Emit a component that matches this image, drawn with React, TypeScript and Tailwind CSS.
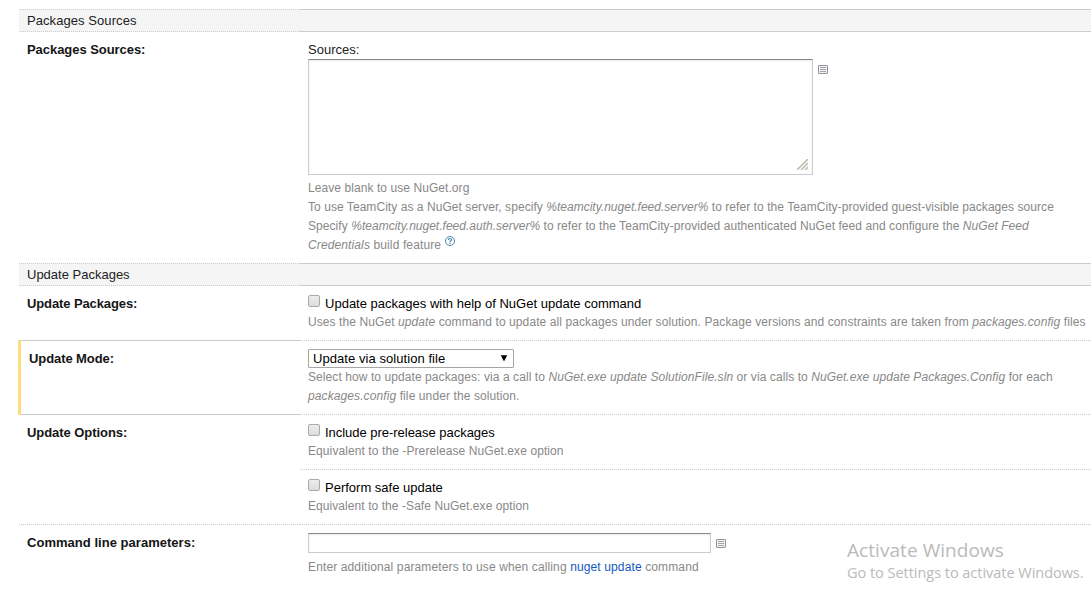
import type { ReactNode } from "react";

function ListIcon({ className }: { className: string }) {
  return (
    <svg className={className} width="10" height="9" viewBox="0 0 10 9">
      <rect x="0.5" y="0.5" width="9" height="8" rx="0.4" fill="#f4f4f4" stroke="#8f9296" />
      <path d="M2 2.5h6M2 4.5h6M2 6.5h6" stroke="#a0a3a7" />
    </svg>
  );
}

function HelpIcon() {
  return (
    <svg className="inline-block align-[3px]" width="10" height="10" viewBox="0 0 10 10" fill="none" stroke="#4c86ab">
      <circle cx="5" cy="5" r="4.5" strokeWidth="1" />
      <path d="M3.4 4V3.5Q3.6 2.5 5 2.5T6.6 3.7Q6.6 4.4 5.6 4.8Q5 5.1 5 6" strokeWidth="1.2" />
      <path d="M5 6.8V8" strokeWidth="1.3" />
    </svg>
  );
}

function SectionHeader({ title, spacing }: { title: string; spacing: string }) {
  return (
    <div className="flex h-[23px] bg-[#f5f5f5]">
      <div className="w-[281px] border-y border-dotted border-[#ccc] pt-[3px] pl-2">
        <span className={spacing}>{title}</span>
      </div>
      <div className="flex-1 border-y border-[#ccc]" />
    </div>
  );
}

function Label({ children, spacing }: { children: ReactNode; spacing: string }) {
  return <span className={`block font-bold text-[#151515] ${spacing}`}>{children}</span>;
}

function Hint({ children, spacing = "" }: { children: ReactNode; spacing?: string }) {
  return <div className={`h-[19px] text-[12px] leading-[19px] text-[#888] ${spacing}`}>{children}</div>;
}

function Check({ label, spacing = "" }: { label: string; spacing?: string }) {
  return (
    <label className="flex h-[18px] items-start">
      <span className="mt-[-1px] mr-[5px] block size-3 rounded-[2px] border border-[#aaa] bg-linear-to-b from-[#ededed] to-[#dcdcdc]" />
      <span className={`text-black ${spacing}`}>{label}</span>
    </label>
  );
}

const field = "block border border-[#ccc] border-t-[#888] bg-white shadow-[inset_0_1px_2px_#e9e9e9]";

export default function App() {
  return (
    <div className="relative h-[601px] w-[1091px] overflow-hidden bg-white pt-[9px] pl-[18px] font-['Liberation_Sans',Arial,sans-serif] text-[13px] leading-[15px] whitespace-nowrap text-[#222]">
      <div className="ml-px">
        <SectionHeader title="Packages Sources" spacing="tracking-[0.07px]" />
        <div className="flex h-[231px]">
          <div className="w-[281px] pt-[10px] pl-2">
            <Label spacing="tracking-[-0.05px]">Packages Sources:</Label>
          </div>
          <div className="flex-1 pt-[10px] pl-2">
            <div className="h-[17px]">Sources:</div>
            <div className="flex h-[120px] items-start">
              <div className={`${field} flex h-[116px] w-[505px] items-end justify-end p-1`}>
                <svg width="11" height="11" viewBox="0 0 11 11" stroke="#bfbfac" strokeWidth="1.6">
                  <path d="M0 11L11 0M4 11L11 4M8 11L11 8" />
                </svg>
              </div>
              <ListIcon className="mt-[6px] ml-[5px]" />
            </div>
            <Hint spacing="tracking-[0.07px]">Leave blank to use NuGet.org</Hint>
            <Hint spacing="tracking-[0.055px]">
              To use TeamCity as a NuGet server, specify <i className="tracking-[0.01px]">%teamcity.nuget.feed.server%</i> to refer to the TeamCity-provided guest-visible packages source
            </Hint>
            <Hint spacing="tracking-[0.068px]">
              Specify <i className="tracking-[0.01px]">%teamcity.nuget.feed.auth.server%</i> to refer to the TeamCity-provided authenticated NuGet feed and configure the <i>NuGet Feed</i>
            </Hint>
            <Hint spacing="tracking-[0.12px]">
              <i>Credentials</i> build feature <HelpIcon />
            </Hint>
          </div>
        </div>
        <SectionHeader title="Update Packages" spacing="" />
        <div className="flex h-[54px]">
          <div className="w-[281px] pt-[10px] pl-2">
            <Label spacing="tracking-[-0.11px]">Update Packages:</Label>
          </div>
          <div className="flex-1 pt-[10px] pl-2">
            <Check label="Update packages with help of NuGet update command" spacing="tracking-[0.01px]" />
            <div className="-mt-px">
              <Hint spacing="tracking-[0.09px]">
                Uses the NuGet <i>update</i> command to update all packages under solution. Package versions and constraints are taken from <i>packages.config</i> files
              </Hint>
            </div>
          </div>
        </div>
      </div>
      <div className="flex h-[75px]">
        <div className="w-[3px] bg-[#ffdc7c]" />
        <div className="w-[279px] border-y border-[#ccc] pt-[10px] pl-2">
          <Label spacing="tracking-[-0.08px]">Update Mode:</Label>
        </div>
        <div className="flex-1 border-y border-dotted border-[#ccc] pt-[8px] pl-2">
          <div className="flex h-[19px] w-[206px] items-start justify-between rounded-[1px] border border-[#a6a6a6] pt-px pr-[5px] pl-1 text-black">
            <span className="tracking-[0.06px]">Update via solution file</span>
            <svg className="mt-1" width="8" height="7" viewBox="0 0 8 7">
              <path d="M0.8 0.3H7.2L4 6.5Z" fill="#000" />
            </svg>
          </div>
          <Hint spacing="tracking-[0.08px]">
            Select how to update packages: via a call to <i>NuGet.exe update SolutionFile.sln</i> or via calls to <i>NuGet.exe update Packages.Config</i> for each
          </Hint>
          <Hint spacing="tracking-[0.1px]">
            <i>packages.config</i> file under the solution.
          </Hint>
        </div>
      </div>
      <div className="ml-px">
        <div className="flex h-[110px]">
          <div className="w-[281px] border-b border-dotted border-[#ccc] pt-[10px] pl-2">
            <Label spacing="tracking-[-0.06px]">Update Options:</Label>
          </div>
          <div className="flex-1">
            <div className="h-[55px] border-b border-dotted border-[#ccc] pt-[10px] pl-2">
              <Check label="Include pre-release packages" spacing="tracking-[-0.03px]" />
              <div className="-mt-px">
                <Hint spacing="tracking-[0.09px]">Equivalent to the -Prerelease NuGet.exe option</Hint>
              </div>
            </div>
            <div className="h-[55px] border-b border-dotted border-[#ccc] pt-[10px] pl-2">
              <Check label="Perform safe update" />
              <div className="-mt-px">
                <Hint spacing="tracking-[0.07px]">Equivalent to the -Safe NuGet.exe option</Hint>
              </div>
            </div>
          </div>
        </div>
        <div className="flex">
          <div className="w-[281px] pt-[10px] pl-2">
            <Label spacing="tracking-[0.03px]">Command line parameters:</Label>
          </div>
          <div className="flex-1 pt-[8px] pl-2">
            <div className="flex h-[25px] items-start">
              <div className={`${field} h-[20px] w-[403px]`} />
              <ListIcon className="mt-[6px] ml-[5px]" />
            </div>
            <Hint spacing="tracking-[0.125px]">
              Enter additional parameters to use when calling <a className="text-[#1558c0]">nuget update</a> command
            </Hint>
          </div>
        </div>
      </div>
      <div className="absolute top-[538px] left-[847px] font-['Open_Sans','Noto_Sans',sans-serif] text-[#bababa]">
        <div className="h-[24px] text-[19px] leading-[24px] tracking-[0.06px]">Activate Windows</div>
        <div className="h-[22px] text-[14.5px] leading-[22px] tracking-[-0.03px]">Go to Settings to activate Windows.</div>
      </div>
    </div>
  );
}
